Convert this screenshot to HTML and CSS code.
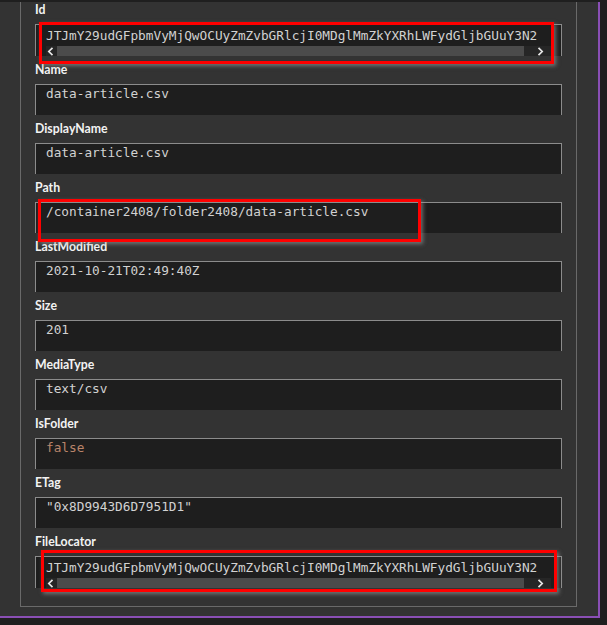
FILE: index.html
```html
<!DOCTYPE html>
<html>
<head>
<meta charset="utf-8">
<link rel="stylesheet" href="styles.css">
</head>
<body>
<div class="frame">
  <div class="panel">
    <div class="field">
      <div class="label first">Id</div>
      <div class="box scroll">
        <div class="val">JTJmY29udGFpbmVyMjQwOCUyZmZvbGRlcjI0MDglMmZkYXRhLWFydGljbGUuY3N2</div>
        <div class="sbar">
          <span class="btn left"><svg width="7" height="9" viewBox="0 0 7 9"><polyline points="5.5,0.8 1.8,4.5 5.5,8.2" fill="none" stroke="#e6e6e6" stroke-width="1.7"/></svg></span>
          <span class="thumb"></span>
          <span class="track"></span>
          <span class="btn right"><svg width="7" height="9" viewBox="0 0 7 9"><polyline points="1.5,0.8 5.2,4.5 1.5,8.2" fill="none" stroke="#e6e6e6" stroke-width="1.7"/></svg></span>
        </div>
      </div>
    </div>
    <div class="field">
      <div class="label">Name</div>
      <div class="box"><div class="val">data-article.csv</div></div>
    </div>
    <div class="field">
      <div class="label">DisplayName</div>
      <div class="box"><div class="val">data-article.csv</div></div>
    </div>
    <div class="field">
      <div class="label">Path</div>
      <div class="box"><div class="val">/container2408/folder2408/data-article.csv</div></div>
    </div>
    <div class="field">
      <div class="label">LastModified</div>
      <div class="box"><div class="val">2021-10-21T02:49:40Z</div></div>
    </div>
    <div class="field">
      <div class="label">Size</div>
      <div class="box"><div class="val">201</div></div>
    </div>
    <div class="field">
      <div class="label">MediaType</div>
      <div class="box"><div class="val">text/csv</div></div>
    </div>
    <div class="field">
      <div class="label">IsFolder</div>
      <div class="box"><div class="val bool">false</div></div>
    </div>
    <div class="field">
      <div class="label">ETag</div>
      <div class="box"><div class="val">"0x8D9943D6D7951D1"</div></div>
    </div>
    <div class="field">
      <div class="label">FileLocator</div>
      <div class="box scroll">
        <div class="val">JTJmY29udGFpbmVyMjQwOCUyZmZvbGRlcjI0MDglMmZkYXRhLWFydGljbGUuY3N2</div>
        <div class="sbar">
          <span class="btn left"><svg width="7" height="9" viewBox="0 0 7 9"><polyline points="5.5,0.8 1.8,4.5 5.5,8.2" fill="none" stroke="#e6e6e6" stroke-width="1.7"/></svg></span>
          <span class="thumb"></span>
          <span class="track"></span>
          <span class="btn right"><svg width="7" height="9" viewBox="0 0 7 9"><polyline points="1.5,0.8 5.2,4.5 1.5,8.2" fill="none" stroke="#e6e6e6" stroke-width="1.7"/></svg></span>
        </div>
      </div>
    </div>
  </div>
  <div class="hl hl-id"></div>
  <div class="hl hl-path"></div>
  <div class="hl hl-loc"></div>
</div>
</body>
</html>
```

FILE: styles.css
```css
html, body {
  margin: 0;
  padding: 0;
  background: #1f1f1f;
}

.frame {
  position: relative;
  width: 600px;
  box-sizing: border-box;
  background: #333333;
  border-right: 2px solid #8a4fb5;
  border-bottom: 2px solid #8a4fb5;
  padding: 0 21px 9px 20px;
}

.panel {
  border-left: 1px solid #6a6a6a;
  border-right: 1px solid #6a6a6a;
  border-bottom: 1px solid #6a6a6a;
  padding: 0 14px 18px 14px;
}

.label {
  font-family: Lato, "Open Sans", sans-serif;
  font-weight: 700;
  font-size: 12.3px;
  line-height: 16px;
  color: #f2f2f2;
  margin: 6px 0 6px 0;
}

.label.first {
  margin-top: 2px;
}

.box {
  box-sizing: border-box;
  height: 31px;
  background: #1e1e1e;
  border: 1px solid #8c8c8c;
  border-bottom: none;
  padding: 1px 10px 0 10px;
}

.box.scroll {
  height: 32px;
  padding-top: 3px;
}

.val {
  font-family: "DejaVu Sans Mono", "Liberation Mono", monospace;
  font-size: 12.75px;
  line-height: 16px;
  color: #d2d2d2;
  white-space: nowrap;
  overflow: hidden;
}

.val.bool {
  color: #b9846a;
}

.sbar {
  display: flex;
  height: 10px;
  margin-top: 2px;
  background: #262626;
}

.btn {
  display: flex;
  align-items: flex-start;
  padding-top: 1px;
}

.btn.left {
  width: 11px;
  padding-left: 1px;
  box-sizing: border-box;
}

.btn.right {
  width: 15px;
  padding-left: 1px;
  box-sizing: border-box;
}

.thumb {
  width: 467px;
  background: #4b4b4b;
}

.track {
  flex: 1;
}

.hl {
  position: absolute;
  box-sizing: border-box;
  border: 3px solid #ff0000;
  box-shadow: 2px 2px 4px rgba(160, 160, 160, 0.6);
}

.hl-id {
  left: 39px;
  top: 20px;
  width: 515px;
  height: 42px;
}

.hl-path {
  left: 38px;
  top: 197px;
  width: 383px;
  height: 43px;
}

.hl-loc {
  left: 41px;
  top: 548px;
  width: 516px;
  height: 42px;
}
```
